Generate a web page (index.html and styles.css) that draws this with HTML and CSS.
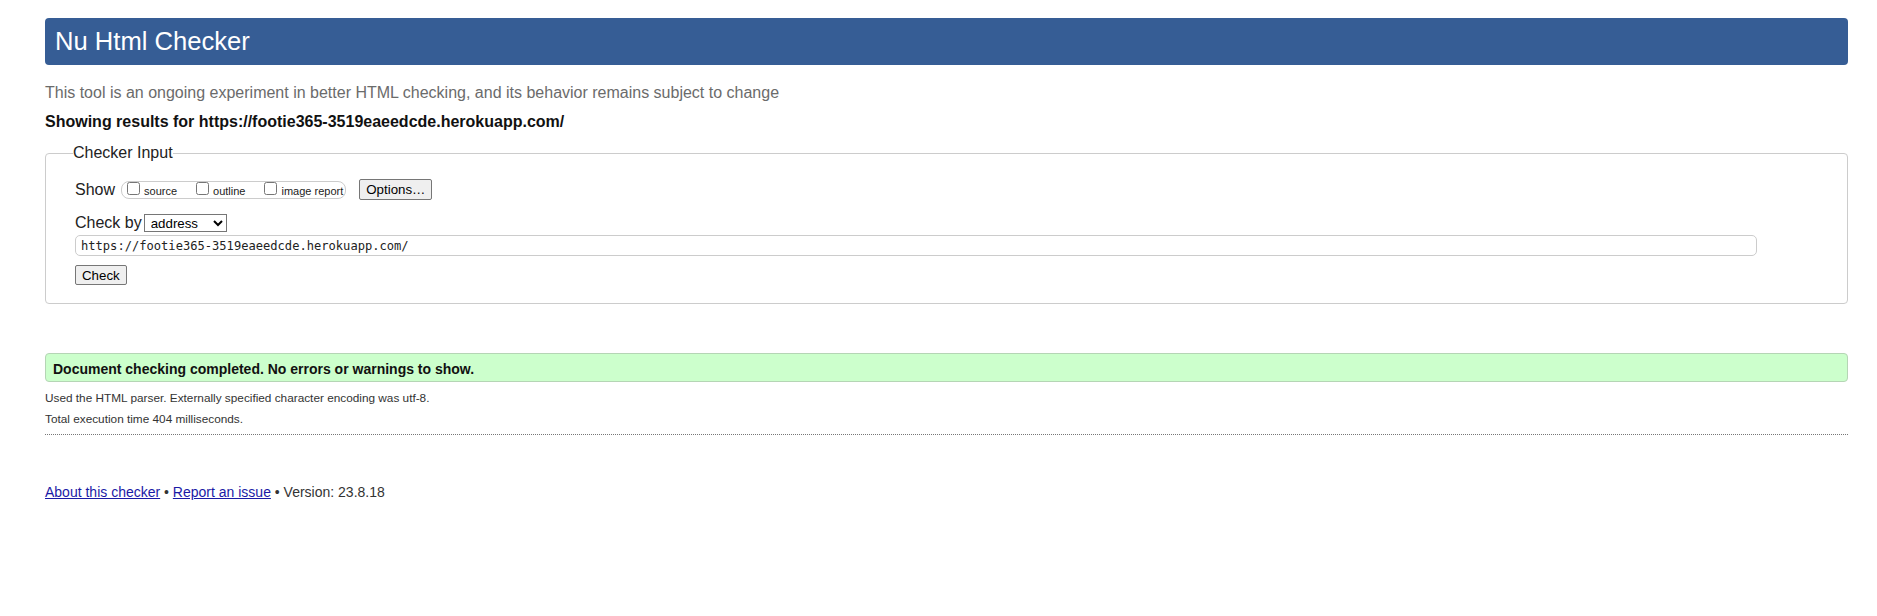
FILE: index.html
```html
<!DOCTYPE html>
<html lang="en">
<head>
<meta charset="utf-8">
<title>Showing results for https://footie365-3519eaeedcde.herokuapp.com/ - Nu Html Checker</title>
<link rel="stylesheet" href="styles.css">
</head>
<body>
<h1 class="title">Nu Html Checker</h1>
<p class="about">This tool is an ongoing experiment in better HTML checking, and its behavior remains subject to change</p>
<p class="results-for">Showing results for https://footie365-3519eaeedcde.herokuapp.com/</p>
<form class="checker-form">
  <fieldset class="checker-input">
    <legend class="checker-legend">Checker Input</legend>
    <div class="row show-row">
      <span class="row-label">Show</span>
      <fieldset class="show-options">
        <label class="opt"><input type="checkbox" class="cb"><span>source</span></label>
        <label class="opt"><input type="checkbox" class="cb"><span>outline</span></label>
        <label class="opt"><input type="checkbox" class="cb"><span>image report</span></label>
      </fieldset>
      <button type="button" class="btn options-btn">Options…</button>
    </div>
    <div class="row checkby-row">
      <span class="row-label">Check by</span>
      <select class="checkby"><option>address</option><option>file upload</option><option>text input</option></select>
    </div>
    <input class="url" type="text" value="https://footie365-3519eaeedcde.herokuapp.com/">
    <button type="button" class="btn check-btn">Check</button>
  </fieldset>
</form>
<div class="success">Document checking completed. No errors or warnings to show.</div>
<p class="details">Used the HTML parser. Externally specified character encoding was utf-8.</p>
<p class="details">Total execution time 404 milliseconds.</p>
<hr class="sep">
<p class="footer"><a class="link" href="#">About this checker</a> • <a class="link" href="#">Report an issue</a> • Version: 23.8.18</p>
</body>
</html>
```

FILE: styles.css
```css
* { box-sizing: border-box; }
html, body { background: #fff; }
body {
  margin: 0;
  padding: 18px 29px 0 45px;
  font-family: "Liberation Sans", Arial, sans-serif;
  font-size: 16px;
  color: #222;
}
.title {
  margin: 0;
  height: 47px;
  padding: 0 10px;
  display: flex;
  align-items: center;
  background: #365d95;
  color: #fff;
  font-size: 25.6px;
  font-weight: normal;
  border-radius: 4px;
}
.about {
  margin: 18px 0 9px;
  line-height: 20px;
  color: #6b6b6b;
}
.results-for {
  margin: 0;
  line-height: 20px;
  font-weight: bold;
  color: #111;
}
.checker-form { margin: 11px 0 0; }
.checker-input {
  margin: 0;
  padding: 16px 29px 18px 29px;
  border: 1px solid #ccc;
  border-radius: 4px;
  min-width: 0;
}
.checker-legend {
  padding: 0;
  margin-left: -2px;
  line-height: 20px;
  font-size: 16px;
  color: #222;
}
.row { display: flex; align-items: center; }
.show-row { height: 21px; }
.row-label { line-height: 20px; }
.show-options {
  margin: 0 0 0 6px;
  padding: 0 2px 0 5px;
  height: 18px;
  border: 1px solid #ccc;
  border-radius: 8px;
  display: flex;
  align-items: flex-start;
  gap: 19px;
  min-width: 0;
}
.opt {
  display: flex;
  align-items: baseline;
  font-size: 11px;
  line-height: 13px;
  color: #222;
}
.cb { margin: 0 4px 0 0; width: 13px; height: 13px; }
.btn {
  font-family: "Liberation Sans", Arial, sans-serif;
  font-size: 13.3px;
  color: #000;
  background: #efefef;
  border: 1px solid #767676;
  border-radius: 2px;
  padding: 0 6px;
}
.options-btn { margin-left: 13px; height: 21px; }
.checkby-row { margin-top: 14px; height: 18px; gap: 2px; }
.checkby {
  height: 18px;
  width: 83px;
  font-family: "Liberation Sans", Arial, sans-serif;
  font-size: 13.3px;
  color: #000;
  border: 1px solid #767676;
  border-radius: 0;
  background: #fff;
  padding: 0 2px;
}
.url {
  display: block;
  margin: 3px 0 0;
  width: calc(100% - 61px);
  height: 21px;
  padding: 0 5px;
  border: 1px solid #ccc;
  border-radius: 5px;
  font-family: "DejaVu Sans Mono", monospace;
  font-size: 12.1px;
  color: #222;
}
.check-btn { display: block; margin: 9px 0 0; height: 20px; }
.success {
  margin: 49px 0 0;
  height: 29px;
  padding: 2px 7px 0;
  display: flex;
  align-items: center;
  background: #ccffcc;
  border: 1px solid #b5d5b5;
  border-radius: 4px;
  font-weight: bold;
  font-size: 14px;
  color: #111;
}
.details {
  margin: 8px 0 0;
  font-size: 11.8px;
  line-height: 16px;
  color: #333;
}
.details + .details { margin-top: 5px; }
.sep {
  margin: 7px 0 0;
  border: 0;
  border-top: 1px dotted #777;
  height: 0;
}
.footer {
  margin: 48px 0 0;
  font-size: 14px;
  line-height: 18px;
  color: #333;
}
.link { color: #1a1aa6; }
```
